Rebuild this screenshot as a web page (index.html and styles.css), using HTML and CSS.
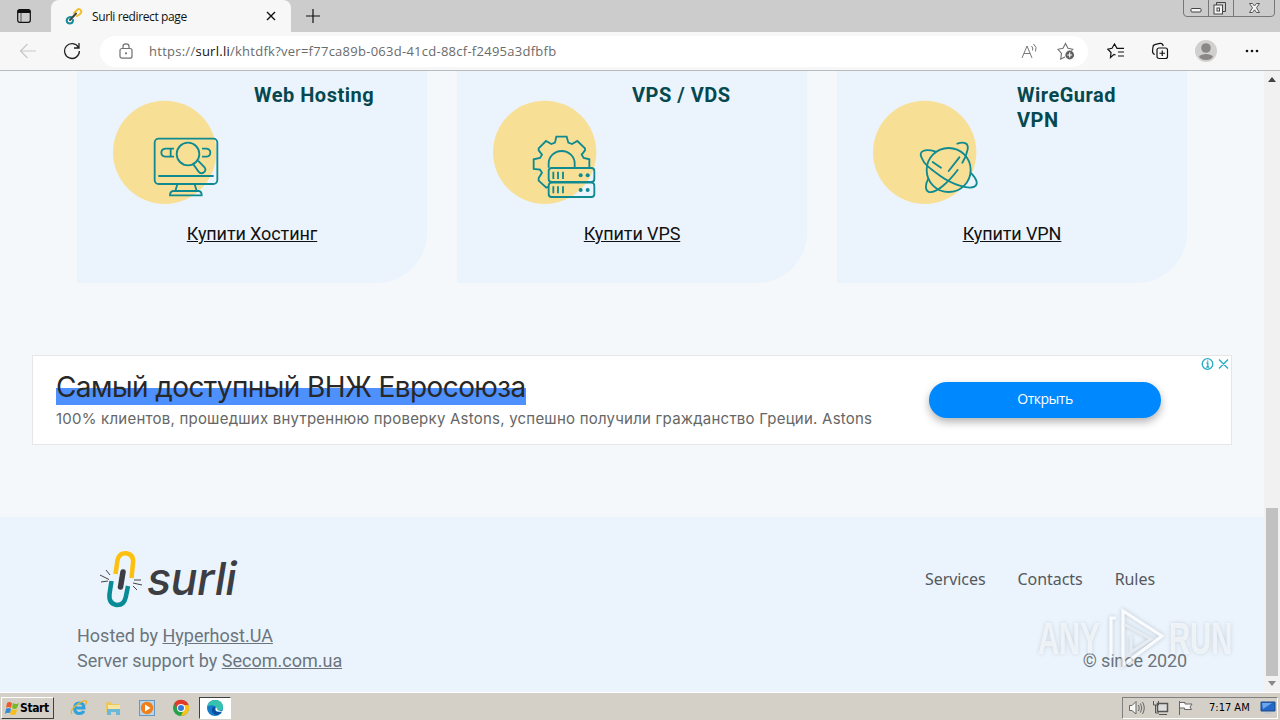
FILE: index.html
```html
<!DOCTYPE html>
<html lang="en">
<head>
    <meta charset="UTF-8">
    <meta name="viewport" content="width=device-width, initial-scale=1.0">
    <title>Surli redirect page</title>
    <link rel="stylesheet" href="styles.css">
</head>
<body>
    <div class="tabs">
        <svg class="tab-menu" viewBox="0 0 16 16" width="16" height="16"><rect x="1.7" y="1.7" width="12.6" height="12.6" rx="2" fill="none" stroke="#111" stroke-width="1.2"/><path d="M1.5 5V3.500Q1.500 1.500 3.500 1.500H12.500Q14.500 1.500 14.500 3.500V5Z" fill="#111"/><path d="M5 5V14" stroke="#555"/></svg>
        <div class="tab">
            <svg viewBox="0 0 18 18" width="18" height="18" fill="none" stroke-width="2" stroke-linecap="round"><path d="M9 6L12 3Q14.500 1 16 3.500Q17 5.500 14.500 7.500L12 9" stroke="#f2c029"/><path d="M8 13Q8 16.500 4.500 16.500Q1.500 16 1.700 13Q2.500 10 6 10" stroke="#158c99"/><path d="M5 13L11 6.500" stroke="#444"/></svg>
            <span class="tab-title">Surli redirect page</span>
            <svg viewBox="0 0 10 10" width="10" height="10" stroke="#111" stroke-width="1.4"><path d="M1 1L9 9M9 1L1 9"/></svg>
        </div>
        <svg class="new-tab" viewBox="0 0 14 14" width="14" height="14" stroke="#111" stroke-width="1.2"><path d="M7 0V14M0 7H14"/></svg>
        <svg class="win-buttons" viewBox="0 0 94 18" width="94" height="18" fill="none" stroke="#777"><path d="M1.500 0V13Q1.500 16.500 5 16.500H89Q92.500 16.500 92.500 13V0M26.500 0V16M51.500 0V16"/><rect x="9" y="8.500" width="10" height="3.500" rx="1" fill="#f5f5f5" stroke="#444"/><path d="M34.500 5V2.500H43.500V11.500H41" stroke="#444"/><rect x="32" y="5" width="8.500" height="9" fill="#f5f5f5" stroke="#444"/><rect x="35" y="8" width="2.500" height="3" stroke="#444"/><path d="M67.500 3.500H70.500L72.500 6L74.500 3.500H77.500L74.500 7.800L77.500 12.500H74.500L72.500 9.800L70.500 12.500H67.500L70.500 7.800Z" fill="#f5f5f5" stroke="#555"/></svg>
    </div>

    <div class="toolbar">
        <svg class="nav-back" viewBox="0 0 18 16" width="18" height="16" fill="none" stroke="#c8c8c8" stroke-width="1.2"><path d="M17 8H2M8.500 1L1.500 8L8.500 15"/></svg>
        <svg class="reload" viewBox="0 0 18 18" width="18" height="18" fill="none" stroke="#222" stroke-width="1.3"><path d="M15.500 5.500A7.400 7.400 0 1 0 16.400 9M16 1V6H11"/></svg>
        <div class="address">
            <svg class="lock" viewBox="0 0 14 16" width="14" height="16" fill="none" stroke="#707070" stroke-width="1.2"><rect x="1" y="5.500" width="12" height="9.700" rx="2"/><path d="M4 5V3.500Q4 .8 7 .8T10 3.500V5"/><circle cx="7" cy="10.300" r=".5"/></svg>
            <span class="url">https://<b>surl.li</b>/khtdfk?ver=f77ca89b-063d-41cd-88cf-f2495a3dfbfb</span>
            <svg class="read" viewBox="0 0 17 16" width="17" height="16" fill="none" stroke="#777"><path d="M1 15L6 3L11 15M3 10.500H9M10.500 3Q12.500 4.800 11.500 7.500M12.500 1Q16.500 4 14.500 8.500"/></svg>
            <svg viewBox="0 0 18 18" width="18" height="18" fill="none" stroke="#707070" stroke-width="1.1"><path d="M8 15L3.700 17L4.500 11.300L1 7.300L6 6.300L8.500 1.500L11 6.300L15.800 7.300L14.500 8.700"/><circle cx="12.700" cy="13" r="4.400" fill="#606060" stroke="none"/><path d="M10.300 13H15.100M12.700 10.600V15.400" stroke="#fff"/></svg>
        </div>
        <svg class="favorites" viewBox="0 0 18 16" width="18" height="16" fill="none" stroke="#111" stroke-width="1.2"><path d="M8.500 12L7 11.400L3.500 14.500L4 9.500L.8 6.200L5 5.300L7.500 1L10 5.300H17M11 9H17M11 13H17"/></svg>
        <svg class="collections" viewBox="0 0 18 18" width="18" height="18" fill="none" stroke="#111" stroke-width="1.200"><path d="M3.800 12.500Q1.600 12 1.500 9L2 5Q2 2.800 4.500 2.300L9 1.400Q11.500 1 12.300 4"/><rect x="6" y="6" width="10.500" height="10.500" rx="2"/><path d="M11.250 8.500V14M8.500 11.250H14"/></svg>
        <svg class="avatar" viewBox="0 0 22 22" width="22" height="22"><circle cx="11" cy="11" r="11" fill="#d2d0ce"/><circle cx="11" cy="8" r="4.800" fill="#8a8886"/><path d="M4 16Q11 12 18 16Q17 20 11 20T4 16Z" fill="#8a8886"/></svg>
        <svg class="more" viewBox="0 0 14 4" width="14" height="4" fill="#111"><circle cx="2" cy="2" r="1.300"/><circle cx="7" cy="2" r="1.300"/><circle cx="12" cy="2" r="1.300"/></svg>
    </div>

    <div class="window">
        <main class="page">
            <section class="cards">
                <div class="card hosting">
                    <div class="card-head">
                        <svg viewBox="129 90 330 318" width="110" height="106" fill="none" stroke="#0f8a91" stroke-width="5.500">
                            <circle cx="284" cy="247" r="155" fill="#f8df96" stroke="none"/>
                            <rect x="254" y="206" width="188" height="136" rx="12"/>
                            <path d="M265 318H431M322 343L316 363M374 343L380 363M310 363H386Q395 364 395 376H300Q300 364 310 363ZM312 236H286Q274 238 274 248T286 260H312M302 236V260M396 236H410Q421 238 421 248T410 260H396"/>
                            <circle cx="354" cy="252" r="34"/>
                            <path d="M370 283L385 304Q393 314 402 307Q410 300 403 291L384 272"/>
                        </svg>
                        <h3>Web Hosting</h3>
                    </div>
                    <a class="buy">Купити Хостинг</a>
                </div>
                <div class="card vps">
                    <div class="card-head">
                        <svg viewBox="129 90 330 318" width="110" height="106" fill="none" stroke="#0f8a91" stroke-width="5.500">
                            <circle cx="284" cy="247" r="155" fill="#f8df96" stroke="none"/>
                            <path d="M296 350L289 353L266 332V324L276 308L270 299L251 297V268L270 264L276 254L266 241V235L288 213L304 222L315 218L319 200H350L355 218L366 222L382 213L405 235V241L395 254L401 264L418 268V293"/>
                            <path d="M296 293V280A39 37 0 0 1 374 280V293"/>
                            <rect x="296" y="294" width="137" height="42" rx="9"/>
                            <rect x="296" y="338" width="137" height="43" rx="9"/>
                            <path d="M310 305V327M324 305V327M339 305V327M310 349V370M324 349V370M339 349V370"/>
                            <g fill="#0f8a91" stroke="none"><circle cx="392" cy="316" r="6"/><circle cx="413" cy="316" r="6"/><circle cx="392" cy="360" r="6"/><circle cx="413" cy="360" r="6"/></g>
                        </svg>
                        <h3>VPS / VDS</h3>
                    </div>
                    <a class="buy">Купити VPS</a>
                </div>
                <div class="card vpn">
                    <div class="card-head">
                        <svg viewBox="129 90 330 318" width="110" height="106" fill="none" stroke="#0f8a91" stroke-width="5.500" stroke-linecap="round">
                            <circle cx="284" cy="247" r="155" fill="#f8df96" stroke="none"/>
                            <circle cx="356" cy="300" r="66"/>
                            <path d="M315 244C285 236 264 243 275 263C282 284 306 300 330 317C366 343 417 359 433 350C447 342 439 326 424 310M382 221C404 214 416 220 413 238Q409 260 397 278M383 300C355 337 318 371 297 366C284 362 286 342 295 326M308 276L333 293M388 262L356 303"/>
                        </svg>
                        <h3>WireGurad<br>VPN</h3>
                    </div>
                    <a class="buy">Купити VPN</a>
                </div>
            </section>

            <section class="ad">
                <div class="ad-text">
                    <div class="ad-title"><span>Самый доступный ВНЖ Евросоюза</span></div>
                    <div class="ad-desc">100% клиентов, прошедших внутреннюю проверку Astons, успешно получили гражданство Греции. Astons</div>
                </div>
                <a class="ad-button">Открыть</a>
                <svg class="ad-choices" viewBox="0 0 28 14" width="28" height="14" fill="none" stroke="#27a9c4" stroke-width="1.300"><circle cx="6.500" cy="7" r="5.300"/><path d="M5.500 6H6.800V10M5.300 10H8.200M6.700 3.500V4.800M18 2.500L27 11.500M27 2.500L18 11.500"/></svg>
            </section>

            <footer>
                <div class="footer-left">
                    <div class="logo">
                        <svg viewBox="0 0 44 60" width="44" height="60" fill="none" stroke-width="4.500"><path d="M15.500 25L17.500 11Q19.500 3.800 26 4.300Q34 5.500 33 14L31.500 29" stroke="#fcc010"/><path d="M11.500 32L9.500 45Q8.500 54.500 16.500 56Q24 56.500 25.800 48L28 37" stroke="#078b96"/><path d="M23 23L20.500 38" stroke="#3d3e43" stroke-width="5.500" stroke-linecap="round"/><path d="M6 21L10 26M0 26L9 30.500M1 33L8 32M34 31H41M33 34L42 36M33 37L37 41" stroke="#444" stroke-width="1"/></svg>
                        <span>surli</span>
                    </div>
                    <p class="hosted">Hosted by <a>Hyperhost.UA</a></p>
                    <p class="support">Server support by <a>Secom.com.ua</a></p>
                </div>
                <div class="footer-right">
                    <nav><a>Services</a><a>Contacts</a><a>Rules</a></nav>
                    <p class="since">© since 2020</p>
                </div>
                <div class="watermark">
                    <span>ANY</span>
                    <svg viewBox="0 0 56 64" width="56" height="64" fill="none" stroke-width="3.200"><path d="M2 51V11H7M14 51V4L53 29L14 58V45" stroke="#fff"/><path d="M15 17L42 32L22 45V29" stroke="#e4e9ee" stroke-width="3"/></svg>
                    <span>RUN</span>
                </div>
            </footer>
        </main>
        <div class="scrollbar">
            <i class="up"></i>
            <div class="thumb"></div>
            <i class="down"></i>
        </div>
    </div>

    <div class="taskbar">
        <div class="start">
            <svg viewBox="0 0 16 16" width="16" height="16"><path d="M3 3Q5 1 8 3L7 8Q4 6 2 8Z" fill="#ef5a28"/><path d="M9 3Q12 5 15 3L13 8Q11 10 8 8Z" fill="#77b82a"/><path d="M2 9Q4 7 7 9L6 13Q3 12 1 14Z" fill="#3588d1"/><path d="M8 9Q11 11 13 9L12 14Q9 16 6 14Z" fill="#f9bd17"/></svg>
            <span>Start</span>
        </div>
        <div class="launch">
            <svg viewBox="0 0 18 18" width="18" height="18" fill="none"><path d="M5 9H14Q14 4 9.500 4Q4.500 4 4.500 9.500Q5 14.500 9.500 14.500Q12.500 14.500 14 12" stroke="#31a3dc" stroke-width="3"/><path d="M2 15Q-1 11 8 5Q15 0 16.500 2.500Q17 4 15 6" stroke="#e7b62c" stroke-width="1.300"/></svg>
            <svg viewBox="0 0 18 18" width="18" height="18"><path d="M2 3H7L8 5H15V13H2Z" fill="#e9c762"/><path d="M4 6H16V13H4Z" fill="#f8e59b"/><path d="M3 10H16V16H12V13H7V16H3Z" fill="#6bb9d8"/></svg>
            <svg viewBox="0 0 18 18" width="18" height="18"><rect x="1.500" y="1.500" width="15" height="15" fill="#b9d5ed" stroke="#6599c2"/><circle cx="9" cy="9" r="6.200" fill="#ef7f18"/><path d="M7 5.500L12.500 9L7 12.500Z" fill="#fff"/></svg>
            <svg viewBox="0 0 18 18" width="18" height="18"><circle cx="9" cy="9" r="8" fill="#26a249"/><path d="M2 5A8 8 0 0 1 16.500 6H9L6 10Z" fill="#e23b2e"/><path d="M16.500 6A8 8 0 0 1 9 17L12 10L10 6Z" fill="#fbc116"/><circle cx="9" cy="9" r="4" fill="#fff"/><circle cx="9" cy="9" r="3" fill="#3778d8"/></svg>
        </div>
        <div class="running">
            <svg viewBox="0 0 18 18" width="18" height="18"><circle cx="9" cy="9" r="8" fill="#137bc9"/><path d="M1.500 7Q3 1 9 1Q16.500 1 17 8Q17 12 12 12Q9 12 10 9Q9 5 1.500 7Z" fill="#35c3b0"/><path d="M10 8Q8 10 10 12Q13 14 16 12Q14 16 10 16Q5 14 6 10Q7 7 10 8Z" fill="#0c4f9e"/><path d="M10 8Q8.500 11 11 12.500L17 13V12Q13 12.500 11.500 11Z" fill="#fff"/></svg>
        </div>
        <div class="tray">
            <svg viewBox="0 0 18 18" width="18" height="18" fill="#f8f8f8" stroke="#666"><path d="M1.500 6.500H4L8 2.500V15L4 11.500H1.500Z"/><path d="M10.500 6Q12 9 10.500 12M12.500 4.500Q15 9 12.500 13.500M14.500 3Q18 9 14.500 15" fill="none"/></svg>
            <svg viewBox="0 0 18 18" width="18" height="18" fill="#ddd" stroke="#555"><rect x="5.500" y="4.500" width="10" height="8" stroke-width="1.500"/><path d="M1.500 2V6H3.500V14H7M6.500 2V6H3.500M7 15.500H15" fill="none"/></svg>
            <svg viewBox="0 0 18 18" width="18" height="18" fill="#fafafa" stroke="#666"><path d="M3.500 2V16M3.500 3.500H9V5H16L14 8L15.500 10.500H8.500V9H3.500"/></svg>
            <span class="clock">7:17 AM</span>
            <svg viewBox="0 0 16 14" width="16" height="14"><path d="M1 1H15V10H1Z" fill="#2469c8" stroke="#1d4b8c"/><path d="M2 2H12L3 8Z" fill="#6aa6e9"/><path d="M5 11H11L12 13H4Z" fill="#c3cad3"/></svg>
        </div>
    </div>
</body>
</html>
```
FILE: styles.css
```css
* {
    box-sizing: border-box;
}
body {
    margin: 0;
    width: 1280px;
    height: 720px;
    overflow: hidden;
    display: flex;
    flex-direction: column;
    font-family: Roboto, sans-serif;
    background: #f5f8fb;
    white-space: nowrap;
}
svg {
    display: block;
    flex: none;
}
h3, p {
    margin: 0;
}

/* browser */
.tabs {
    height: 32px;
    flex: none;
    display: flex;
    align-items: center;
    background: #cccccc;
}
.tab-menu {
    margin: 0 11px 0 16px;
}
.tab {
    align-self: stretch;
    width: 240px;
    margin-left: 8px;
    padding: 0 15px 0 14px;
    display: flex;
    align-items: center;
    background: #f7f7f7;
    border-radius: 8px 8px 0 0;
    font: 12px "Open Sans", sans-serif;
    color: #111;
}
.tab-title {
    margin-left: 9px;
    flex: 1;
    letter-spacing: -0.38px;
}
.new-tab {
    margin-left: 15px;
}
.win-buttons {
    align-self: flex-start;
    margin-left: auto;
    margin-right: 4px;
}
.toolbar {
    height: 39px;
    flex: none;
    display: flex;
    align-items: center;
    background: #f7f7f7;
    border-bottom: 1px solid #b9bbbd;
}
.nav-back {
    margin-left: 19px;
}
.reload {
    margin-left: 26px;
}
.address {
    width: 988px;
    height: 31px;
    margin-left: 19px;
    padding: 0 13px 0 19px;
    display: flex;
    align-items: center;
    background: white;
    border-radius: 16px;
}
.url {
    margin-left: 16px;
    flex: 1;
    font: 13px "Open Sans", sans-serif;
    letter-spacing: 0.26px;
    color: #6b6b6b;
}
.url b {
    font-weight: normal;
    color: #111;
}
.read {
    margin-right: 19px;
}
.favorites {
    margin-left: 19px;
}
.collections {
    margin-left: 26px;
}
.avatar {
    margin-left: 26px;
}
.more {
    margin-left: 28px;
}

/* page */
.window {
    height: 621px;
    display: flex;
}
.page {
    width: 1264px;
    background: #f5f8fb;
}
.cards {
    display: flex;
    gap: 30px;
    padding-left: 77px;
}
.card {
    width: 350px;
    height: 212px;
    display: flex;
    flex-direction: column;
    align-items: center;
    background: #ebf4fc;
    border-bottom-right-radius: 50px;
}
.card-head {
    width: 100%;
    height: 151px;
    display: flex;
    padding: 29px 0 0 36px;
}
.card h3 {
    margin: -17px 0 0 31px;
    font-size: 20px;
    line-height: 25px;
    font-weight: 700;
    letter-spacing: 0.5px;
    color: #06484f;
}
.vps h3 {
    margin-left: 29px;
}
.vpn h3 {
    margin-left: 34px;
}
.buy {
    font-size: 18px;
    line-height: 24px;
    letter-spacing: -0.1px;
    color: #111;
    text-decoration: underline;
}
.ad {
    position: relative;
    width: 1200px;
    height: 90px;
    margin: 72px 0 0 32px;
    padding: 0 70px 0 23px;
    display: flex;
    justify-content: space-between;
    background: white;
    border: 1px solid #e6e6e6;
}
.ad-title {
    margin-top: 13px;
    font: 28px/36px Inter, sans-serif;
    letter-spacing: -0.59px;
    color: #282828;
}
.ad-title span {
    background: linear-gradient(transparent 19px, #4d90fe 19px);
    display: inline-block;
}
.ad-desc {
    margin-top: 4px;
    font: 15px/20px Inter, sans-serif;
    letter-spacing: 0.23px;
    color: #666;
}
.ad-button {
    width: 232px;
    height: 36px;
    margin-top: 26px;
    border-radius: 18px;
    background: #0088ff;
    box-shadow: 0 4px 8px rgba(0, 0, 0, 0.3);
    color: white;
    font: 14px/34px "Open Sans", sans-serif;
    letter-spacing: -0.5px;
    text-align: center;
}
.ad-choices {
    position: absolute;
    top: 1px;
    right: 2px;
}
footer {
    position: relative;
    height: 175px;
    margin-top: 72px;
    padding: 32px 77px 0;
    display: flex;
    justify-content: space-between;
    background: #ebf4fc;
    color: #6c757d;
}
.logo {
    display: flex;
    height: 74px;
    padding-left: 23px;
}
.logo span {
    margin-left: 3px;
    font: italic 500 45px/60px Inter, sans-serif;
    letter-spacing: -0.6px;
    color: #3d3e43;
}
.footer-left p {
    font-size: 18px;
    line-height: 25px;
}
.footer-left a {
    text-decoration: underline;
}
.footer-right {
    text-align: right;
}
nav {
    display: flex;
    gap: 32px;
    padding: 18px 32px 0 0;
    font: 16px/24px "Noto Sans", sans-serif;
    letter-spacing: -0.06px;
    color: #55585c;
}
.since {
    margin-top: 57px;
    font-size: 18px;
    line-height: 26px;
    letter-spacing: -0.15px;
}
.watermark {
    position: absolute;
    left: 1038px;
    top: 90px;
    display: flex;
    align-items: center;
    gap: 4px;
    font: 700 45px/64px "Liberation Sans", sans-serif;
    color: rgba(255, 255, 255, 0.7);
    filter: drop-shadow(0 0 2px rgba(100, 110, 125, 0.5));
    opacity: 0.7;
}
.watermark span {
    width: 67px;
    transform: scaleX(0.65);
    transform-origin: left;
}
.scrollbar {
    width: 16px;
    display: flex;
    flex-direction: column;
    align-items: center;
    background: #f1f1f1;
}
.scrollbar i {
    border: 4px solid transparent;
}
.scrollbar .up {
    margin-top: 2px;
    border-bottom: 5px solid #444;
}
.scrollbar .down {
    margin-top: 5px;
    border-top: 5px solid #888;
}
.thumb {
    width: 12px;
    height: 168px;
    margin-top: 426px;
    background: #c1c1c1;
}

/* taskbar */
.taskbar {
    height: 28px;
    flex: none;
    display: flex;
    align-items: center;
    padding: 2px 2px 0 1px;
    background: #d4d0c8;
    border-top: 1px solid white;
}
.start {
    width: 53px;
    height: 22px;
    padding-left: 2px;
    display: flex;
    align-items: center;
    border: 1px solid;
    border-color: white #404040 #404040 white;
    font: bold 12px "DejaVu Sans Condensed", "DejaVu Sans", sans-serif;
    letter-spacing: -0.4px;
}
.launch {
    display: flex;
    gap: 16px;
    margin-left: 16px;
}
.running {
    width: 32px;
    height: 22px;
    margin-left: 9px;
    padding: 1px 6px;
    background: white;
    border: 1px solid;
    border-color: #404040 white white #404040;
}
.tray {
    width: 156px;
    height: 22px;
    margin-left: auto;
    padding: 0 0 0 5px;
    display: flex;
    align-items: center;
    gap: 6px;
    border: 1px solid;
    border-color: #808080 white white #808080;
    font: 11px "DejaVu Sans Condensed", sans-serif;
}
.clock {
    width: 45px;
    margin-left: 9px;
    letter-spacing: 0;
}
```
